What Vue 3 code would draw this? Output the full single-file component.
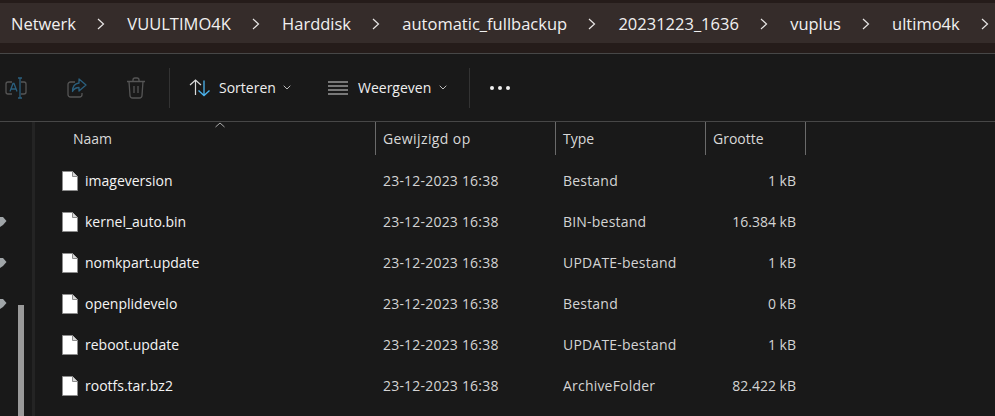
<script setup>
const crumbs = ['Netwerk', 'VUULTIMO4K', 'Harddisk', 'automatic_fullbackup', '20231223_1636', 'vuplus', 'ultimo4k']

const files = [
  { name: 'imageversion', date: '23-12-2023 16:38', type: 'Bestand', size: '1 kB' },
  { name: 'kernel_auto.bin', date: '23-12-2023 16:38', type: 'BIN-bestand', size: '16.384 kB' },
  { name: 'nomkpart.update', date: '23-12-2023 16:38', type: 'UPDATE-bestand', size: '1 kB' },
  { name: 'openplidevelo', date: '23-12-2023 16:38', type: 'Bestand', size: '0 kB' },
  { name: 'reboot.update', date: '23-12-2023 16:38', type: 'UPDATE-bestand', size: '1 kB' },
  { name: 'rootfs.tar.bz2', date: '23-12-2023 16:38', type: 'ArchiveFolder', size: '82.422 kB' }
]

const pins = [0, 1, 2]
</script>

<template>
  <div class="explorer">
    <div class="title-area">
      <nav class="address">
        <template v-for="c in crumbs" :key="c">
          <span class="crumb">{{ c }}</span>
          <svg class="chev" width="8" height="12" viewBox="0 0 8 12"><path d="M1 1l5.500 5L1 11" fill="none" stroke="#e8e6e5" stroke-width="1.2"/></svg>
        </template>
      </nav>
    </div>

    <div class="toolbar">
      <div class="tool-group">
        <svg class="tool-icon" width="22" height="22" viewBox="0 0 22 22">
          <path d="M7 5H3a2 2 0 0 0-2 2v8a2 2 0 0 0 2 2h4M16 5h3a2 2 0 0 1 2 2v8a2 2 0 0 1-2 2h-3" fill="none" stroke="#555" stroke-width="1.3"/>
          <path d="M5 14.500L8 6.500h1l3 8M6 12h5" fill="none" stroke="#2a5f7e" stroke-width="1.3"/>
          <path d="M13 1h4M13 21h4M15 1v20" fill="none" stroke="#2a5f7e" stroke-width="1.3"/>
        </svg>
        <svg class="tool-icon" width="20" height="20" viewBox="0 0 20 20">
          <path d="M8 4H3.500A2.500 2.500 0 0 0 1 6.500v10A2.500 2.500 0 0 0 3.500 19h9a2.500 2.500 0 0 0 2.500-2.500V15" fill="none" stroke="#555" stroke-width="1.3"/>
          <path d="M12 1l7 6-7 6V9.500c-3 0-5 1-6.500 4 0-5 2.500-8 6.500-8.500z" fill="none" stroke="#2a5f7e" stroke-width="1.3" stroke-linejoin="round"/>
        </svg>
        <svg class="tool-icon" width="20" height="22" viewBox="0 0 20 22">
          <path d="M1 4.500h18M7 4.500V3a2 2 0 0 1 2-2h2a2 2 0 0 1 2 2v1.500M3 4.500l1 14a2.500 2.500 0 0 0 2.500 2.500h7a2.500 2.500 0 0 0 2.500-2.500l1-14M8 9v7M12 9v7" fill="none" stroke="#555" stroke-width="1.3"/>
        </svg>
      </div>
      <div class="divider"></div>
      <div class="tool-btn sort">
        <svg width="21" height="18" viewBox="0 0 21 18">
          <path d="M1 6l5.500-5L12 6M6.500 1v15" fill="none" stroke="#dcdcdc" stroke-width="1.2"/>
          <path d="M9.500 11.500l5.500 5 5.500-5M15 1.500v15" fill="none" stroke="#4cb4ee" stroke-width="1.3"/>
        </svg>
        <span>Sorteren</span>
        <svg class="caret" width="8" height="5" viewBox="0 0 8 5"><path d="M.7.7L4 4 7.300.7" fill="none" stroke="#bbb" stroke-width="1"/></svg>
      </div>
      <div class="tool-btn view">
        <svg width="20" height="14" viewBox="0 0 20 14">
          <path d="M0 1h20M0 5h20M0 9h20M0 13h20" stroke="#d8d8d8" stroke-width="1.2"/>
        </svg>
        <span>Weergeven</span>
        <svg class="caret" width="8" height="5" viewBox="0 0 8 5"><path d="M.7.7L4 4 7.300.7" fill="none" stroke="#bbb" stroke-width="1"/></svg>
      </div>
      <div class="divider second"></div>
      <div class="more"><i></i><i></i><i></i></div>
    </div>

    <div class="body">
      <aside class="side">
        <div class="pins">
          <svg v-for="p in pins" :key="p" width="7" height="12" viewBox="0 0 7 12"><path d="M0 1h3l3.500 4L3 9l-3 2z" fill="#a0a5a8"/></svg>
        </div>
        <div class="side-scroll"></div>
      </aside>
      <main class="list">
        <div class="grid head">
          <div class="col name-col">Naam
            <svg class="sort-arrow" width="10" height="6" viewBox="0 0 10 6"><path d="M.5 5L5 1l4.500 4" fill="none" stroke="#aaa" stroke-width="1"/></svg>
          </div>
          <div class="col wide">Gewijzigd op</div>
          <div class="col">Type</div>
          <div class="col">Grootte</div>
        </div>
        <div v-for="f in files" :key="f.name" class="grid row">
          <div class="cell file">
            <svg width="16" height="20" viewBox="0 0 16 20">
              <path d="M.5.500h10l5 5v14H.500z" fill="#fff" stroke="#8c8c8c" stroke-width="1"/>
              <path d="M10.500.500v5h5" fill="#d8d8d8" stroke="#8c8c8c" stroke-width="1"/>
            </svg>
            <span>{{ f.name }}</span>
          </div>
          <div class="cell dim date">{{ f.date }}</div>
          <div class="cell dim kind">{{ f.type }}</div>
          <div class="cell dim size">{{ f.size }}</div>
        </div>
      </main>
    </div>
  </div>
</template>

<style scoped>
.explorer {
  width: 995px;
  height: 416px;
  overflow: hidden;
  display: flex;
  flex-direction: column;
  background: #191919;
  color: #f2f2f2;
  font-family: "Open Sans", "Noto Sans", sans-serif;
}

.title-area {
  height: 54px;
  box-sizing: border-box;
  padding-top: 3px;
  background: #251c1a;
  border-bottom: 1px solid #474747;
}

.address {
  height: 40px;
  padding-left: 11px;
  display: flex;
  align-items: center;
  background: #352c2a;
  white-space: nowrap;
}

.crumb {
  font-size: 16.5px;
  color: #f1f0f0;
}

.chev {
  margin: 1px 22.3px 0 21px;
  flex: none;
}

.toolbar {
  height: 68px;
  box-sizing: border-box;
  flex: none;
  display: flex;
  align-items: center;
  border-bottom: 1px solid #474747;
  font-size: 14px;
}

.tool-group {
  width: 169px;
  flex: none;
  display: flex;
  align-items: center;
  padding-left: 5px;
  box-sizing: border-box;
}

.tool-icon {
  flex: none;
}

.tool-icon:nth-child(1) {
  margin-right: 40px;
}

.tool-icon:nth-child(2) {
  margin-right: 39px;
}

.divider {
  width: 1px;
  height: 40px;
  background: #333;
  flex: none;
}

.tool-btn {
  display: flex;
  align-items: center;
  color: #eee;
}

.sort {
  margin-left: 19px;
  width: 139px;
}

.sort span {
  margin-left: 9px;
}

.sort .caret {
  margin-left: 7px;
}

.view {
  width: 141px;
}

.view span {
  margin-left: 10px;
}

.caret {
  margin-left: 8px;
}

.more {
  margin-left: 20px;
  display: flex;
  gap: 4px;
}

.more i {
  width: 4px;
  height: 4px;
  border-radius: 50%;
  background: #f0f0f0;
}

.body {
  flex: 1;
  display: flex;
}

.side {
  width: 35px;
  flex: none;
  position: relative;
  border-right: 3px solid #242424;
  box-sizing: border-box;
}

.pins {
  position: absolute;
  top: 94px;
  left: 0;
  display: flex;
  flex-direction: column;
  gap: 29px;
}

.side-scroll {
  position: absolute;
  left: 18px;
  top: 183px;
  bottom: 0;
  width: 6px;
  background: #9a9a9a;
}

.list {
  flex: 1;
}

.grid {
  display: grid;
  grid-template-columns: 341px 180px 150px 100px;
}

.head {
  height: 33px;
  align-items: stretch;
  font-size: 14px;
  color: #d8d8d8;
}

.col {
  position: relative;
  display: flex;
  align-items: center;
  padding-left: 7px;
  padding-bottom: 1px;
  border-right: 1px solid #6a6a6a;
}

.wide {
  letter-spacing: 0.4px;
}

.name-col {
  padding-left: 38px;
}

.sort-arrow {
  position: absolute;
  left: 180px;
  top: 0;
}

.row {
  height: 41px;
  align-items: center;
  font-size: 14px;
}

.head + .row {
  margin-top: 5px;
}

.cell {
  padding-left: 7px;
  white-space: nowrap;
}

.date,
.kind {
  letter-spacing: 0.2px;
}

.file {
  display: flex;
  align-items: center;
  gap: 7px;
  padding-left: 27px;
  color: #f4f4f4;
}

.dim {
  color: #d4d4d4;
}

.size {
  text-align: right;
  padding: 0 10px 0 0;
}
</style>
